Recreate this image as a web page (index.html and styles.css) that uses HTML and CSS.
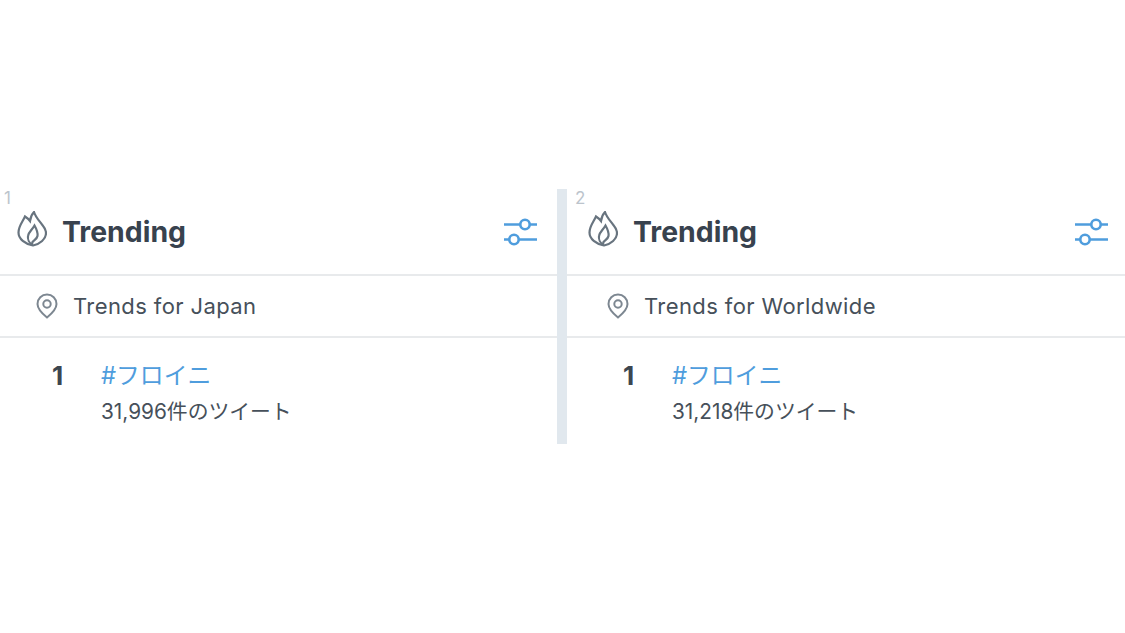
FILE: index.html
```html
<!DOCTYPE html>
<html lang="en">
<head>
  <meta charset="UTF-8" />
  <title>Trending</title>
  <link rel="stylesheet" href="styles.css">
</head>
<body>

<svg class="sprites" width="0" height="0">
  <symbol id="flame" viewBox="0 0 30 36">
    <path d="M16 34.500C8 33 1.500 28 1.500 21.500C1.500 15 5.500 11 8 5.500C9.500 6.500 11.500 8 13 10C13.500 6 15 3 17 1C18.500 6 22 9.500 25 13.500C27.500 16.500 29 19 29 22C29 28 23 33 16 34.500Z"/>
    <path d="M15.500 34C12 32 10.500 28 11 25C11.500 21 15 19 17.500 14.500C19.500 18 21 22 20.500 25C20 28 17 29 15.500 31C15 32 15 33 15.500 34"/>
  </symbol>
  <symbol id="pin" viewBox="0 0 22 26">
    <path d="M11 24.500C5.500 20 1.500 16 1.500 11a9.500 9.500 0 0 1 19 0c0 5-4 9-9.500 13.500z"/>
    <circle cx="11" cy="11" r="3.700"/>
  </symbol>
  <symbol id="sliders" viewBox="0 0 33 28">
    <path d="M0 6.500H16.300M25.700 6.500H33M0 21.500H5.300M14.700 21.500H33"/>
    <circle cx="21" cy="6.500" r="4.700"/>
    <circle cx="10" cy="21.500" r="4.700"/>
  </symbol>
</svg>

<div class="columns">
  <div class="column">
    <span class="column-num">1</span>
    <div class="header">
      <svg class="flame-icon"><use href="#flame"/></svg>
      <h1>Trending</h1>
      <svg class="sliders-icon"><use href="#sliders"/></svg>
    </div>
    <div class="location">
      <svg class="pin-icon"><use href="#pin"/></svg>
      <span>Trends for Japan</span>
    </div>
    <div class="trend">
      <div class="rank">1</div>
      <div>
        <div class="tag">#フロイニ</div>
        <div class="count">31,996件のツイート</div>
      </div>
    </div>
  </div>

  <div class="divider"></div>

  <div class="column column-second">
    <span class="column-num">2</span>
    <div class="header">
      <svg class="flame-icon"><use href="#flame"/></svg>
      <h1>Trending</h1>
      <svg class="sliders-icon"><use href="#sliders"/></svg>
    </div>
    <div class="location">
      <svg class="pin-icon"><use href="#pin"/></svg>
      <span>Trends for Worldwide</span>
    </div>
    <div class="trend">
      <div class="rank">1</div>
      <div>
        <div class="tag">#フロイニ</div>
        <div class="count">31,218件のツイート</div>
      </div>
    </div>
  </div>
</div>

</body>
</html>
```

FILE: styles.css
```css
* {
  box-sizing: border-box;
  margin: 0;
  padding: 0;
}
body {
  font-family: Inter, "Noto Sans CJK JP", sans-serif;
  background-color: #fff;
  color: #3c4650;
  height: 633px;
  overflow: hidden;
  padding-top: 189px;
}
.sprites {
  position: absolute;
}
.columns {
  display: flex;
  height: 255px;
}
.column {
  --inset: 0px;
  --end: 20px;
  width: 557px;
  position: relative;
}
.column-second {
  --inset: 4px;
  --end: 17px;
  width: 558px;
}
.divider {
  width: 10px;
  background-color: #e1e8ee;
}
.column-num {
  position: absolute;
  top: 0;
  left: calc(4px + var(--inset));
  font-size: 17px;
  line-height: 18px;
  color: #bcc4cc;
}
.header {
  display: flex;
  align-items: center;
  height: 87px;
  padding: 0 var(--end) 0 calc(17px + var(--inset));
  border-bottom: 2px solid #e8eaec;
}
.header h1 {
  flex: 1;
  margin-left: 15px;
  font-size: 28.400px;
  font-weight: 700;
  color: #38424e;
}
.flame-icon {
  width: 30px;
  height: 36px;
  margin-bottom: 5px;
  fill: none;
  stroke: #68747f;
  stroke-width: 2.200;
}
.sliders-icon {
  width: 33px;
  height: 28px;
  fill: none;
  stroke: #4f9ddd;
  stroke-width: 2.600;
}
.location {
  display: flex;
  align-items: center;
  height: 62px;
  padding-left: calc(36px + var(--inset));
  border-bottom: 2px solid #e8eaec;
  font-size: 22px;
  letter-spacing: 0.4px;
  color: #46505a;
}
.pin-icon {
  width: 22px;
  height: 26px;
  margin-right: 15px;
  fill: none;
  stroke: #7d8791;
  stroke-width: 2;
}
.trend {
  display: flex;
  padding-top: 22px;
  padding-left: var(--inset);
}
.rank {
  width: 101px;
  padding-left: 52px;
  font-size: 26px;
  font-weight: 700;
  line-height: 32px;
}
.tag {
  font-size: 23.800px;
  line-height: 32px;
  color: #4f9ddd;
}
.count {
  margin-top: 6px;
  font-size: 20.800px;
  line-height: 28px;
  color: #46505a;
}
```
